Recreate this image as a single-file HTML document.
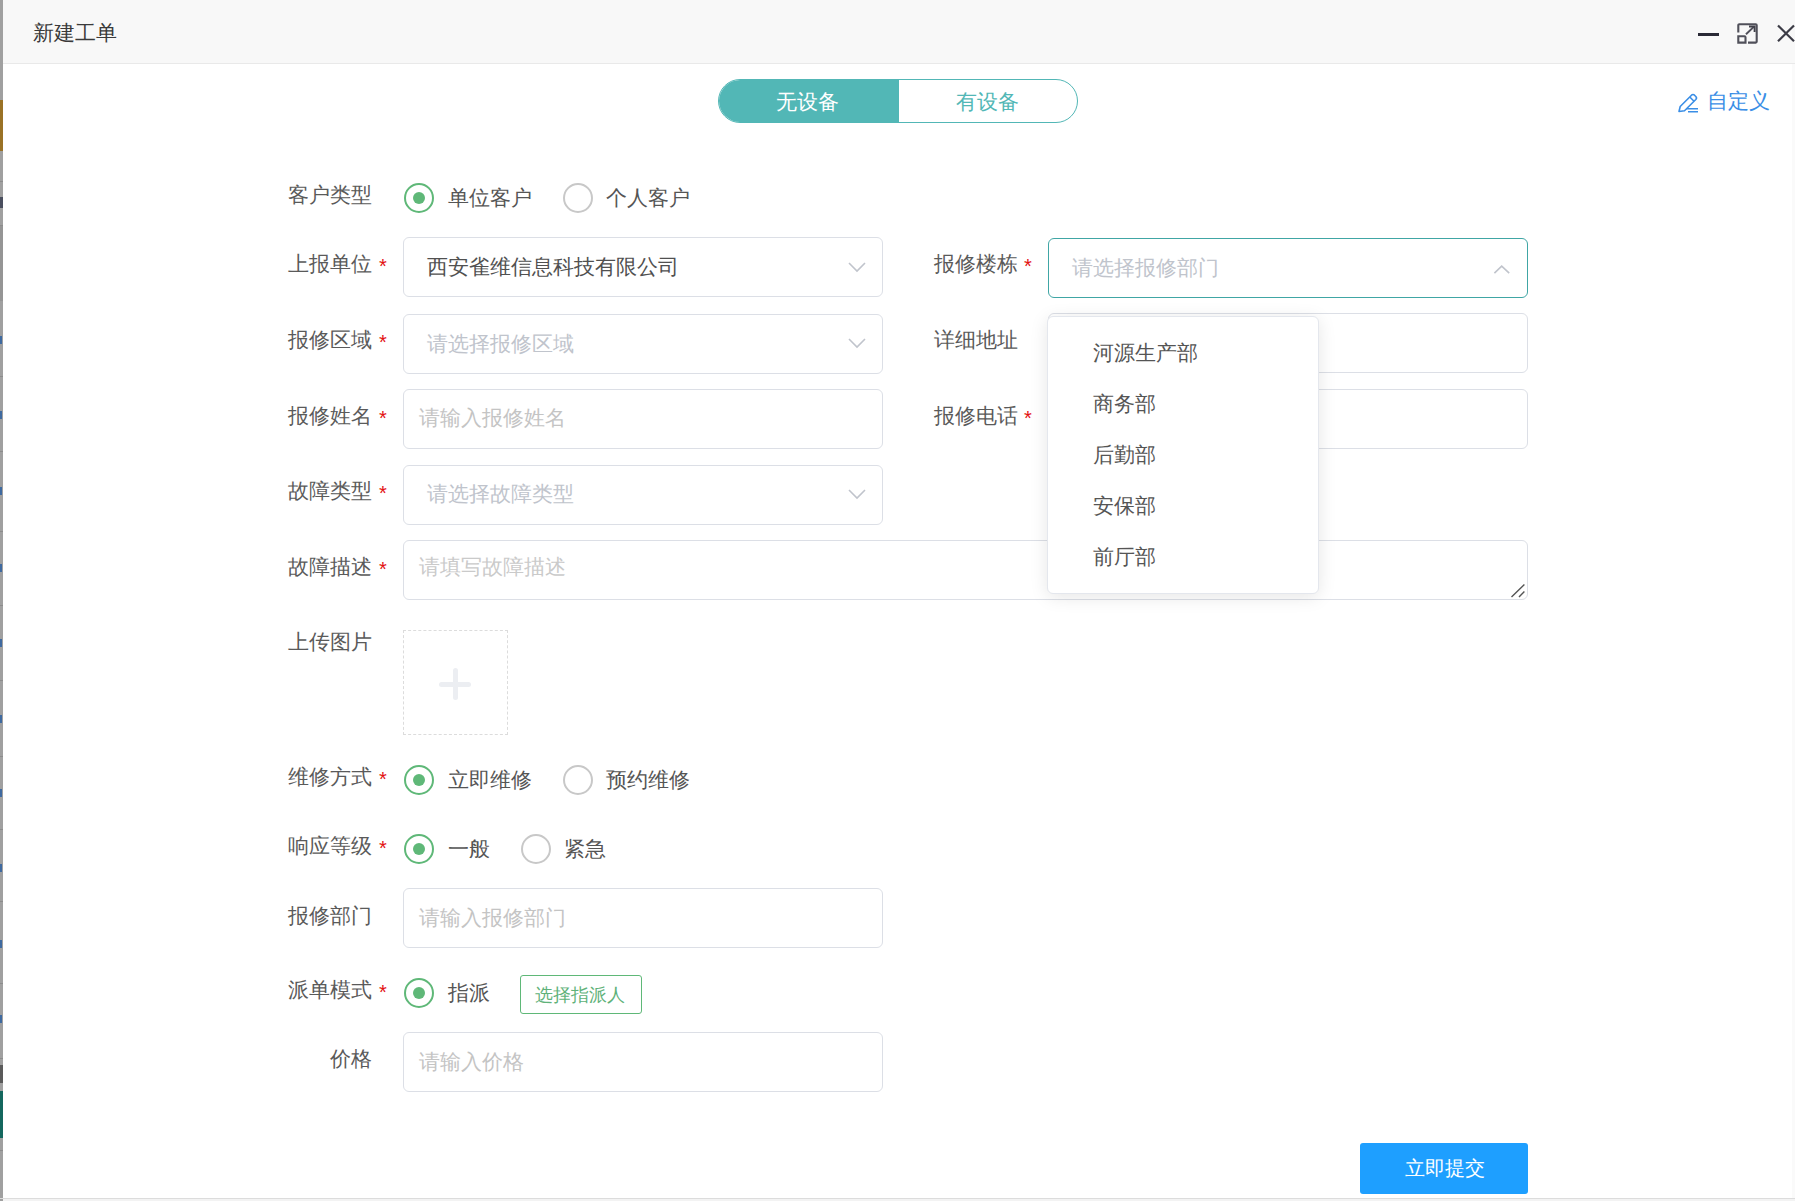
<!DOCTYPE html>
<html><head><meta charset="utf-8">
<style>
html,body{margin:0;padding:0;}
body{width:1795px;height:1201px;position:relative;overflow:hidden;background:#f3f3f3;font-family:"Liberation Sans",sans-serif;}
.a{position:absolute;}
.t{position:absolute;white-space:nowrap;line-height:1;}
.lbl{font-size:21px;color:#5a5a5a;}
.star{position:absolute;color:#e31010;font-size:20px;line-height:1;}
.inp{position:absolute;box-sizing:border-box;border:1px solid #dcdfe6;border-radius:6px;background:#fff;}
.ph{color:#c0c4cc;font-size:21px;}
.ph2{color:#c4c4c4;font-size:21px;}
.radio{position:absolute;box-sizing:border-box;width:30px;height:30px;border-radius:50%;border:2px solid #5fb878;background:#fff;}
.radio.on::after{content:"";position:absolute;left:7px;top:7px;width:12px;height:12px;border-radius:50%;background:#5fb878;}
.radio.off{border-color:#c8c8c8;}
.rtxt{font-size:21px;color:#555;}
.chev{position:absolute;}
.item{font-size:21px;color:#555;}
</style></head><body>
<!-- left underlying strip -->
<div class="a" style="left:0;top:0;width:3px;height:1201px;background:#a0a0a0"></div>
<div class="a" style="left:0;top:100px;width:3px;height:51px;background:#9a7226"></div>
<div class="a" style="left:0;top:197px;width:3px;height:11px;background:#4a4e5e"></div>
<div class="a" style="left:0;top:226px;width:3px;height:75px;background:#959595"></div>
<div class="a" style="left:0;top:181px;width:3px;height:1px;background:#8c8c8c"></div>
<div class="a" style="left:0;top:225px;width:3px;height:1px;background:#8c8c8c"></div>
<div class="a" style="left:0;top:376px;width:3px;height:1px;background:#8c8c8c"></div>
<div class="a" style="left:0;top:451px;width:3px;height:1px;background:#8c8c8c"></div>
<div class="a" style="left:0;top:531px;width:3px;height:1px;background:#8c8c8c"></div>
<div class="a" style="left:0;top:605px;width:3px;height:1px;background:#8c8c8c"></div>
<div class="a" style="left:0;top:680px;width:3px;height:1px;background:#8c8c8c"></div>
<div class="a" style="left:0;top:756px;width:3px;height:1px;background:#8c8c8c"></div>
<div class="a" style="left:0;top:829px;width:3px;height:1px;background:#8c8c8c"></div>
<div class="a" style="left:0;top:901px;width:3px;height:1px;background:#8c8c8c"></div>
<div class="a" style="left:0;top:983px;width:3px;height:1px;background:#8c8c8c"></div>
<div class="a" style="left:0;top:1058px;width:3px;height:1px;background:#8c8c8c"></div>
<div class="a" style="left:0;top:1150px;width:3px;height:1px;background:#8c8c8c"></div>
<div class="a" style="left:0;top:336px;width:2px;height:8px;background:#3f6aa0"></div>
<div class="a" style="left:0;top:411px;width:2px;height:8px;background:#3f6aa0"></div>
<div class="a" style="left:0;top:487px;width:2px;height:8px;background:#3f6aa0"></div>
<div class="a" style="left:0;top:564px;width:2px;height:8px;background:#3f6aa0"></div>
<div class="a" style="left:0;top:639px;width:2px;height:8px;background:#3f6aa0"></div>
<div class="a" style="left:0;top:715px;width:2px;height:8px;background:#3f6aa0"></div>
<div class="a" style="left:0;top:789px;width:2px;height:8px;background:#3f6aa0"></div>
<div class="a" style="left:0;top:864px;width:2px;height:8px;background:#3f6aa0"></div>
<div class="a" style="left:0;top:940px;width:2px;height:8px;background:#3f6aa0"></div>
<div class="a" style="left:0;top:1015px;width:2px;height:8px;background:#3f6aa0"></div>
<div class="a" style="left:0;top:1065px;width:3px;height:18px;background:#5a5a5a"></div>
<div class="a" style="left:0;top:1091px;width:3px;height:47px;background:#14675e"></div>
<!-- dialog -->
<div class="a" style="left:3px;top:0;width:1789px;height:1198px;background:#fff"></div>
<div class="a" style="left:1792px;top:0;width:3px;height:1198px;background:#fafafa"></div>
<div class="a" style="left:0;top:1198px;width:1795px;height:1px;background:#dcdcdc"></div>
<!-- title bar -->
<div class="a" style="left:3px;top:0;width:1792px;height:63px;background:#f8f8f8;border-bottom:1px solid #e9e9e9"></div>
<div class="t" style="left:33px;top:22px;font-size:21px;color:#3a3a3a">新建工单</div>
<div class="a" style="left:1698px;top:33px;width:21px;height:3px;background:#2a2a36"></div>
<svg class="a" style="left:1735px;top:21px" width="26" height="26" viewBox="0 0 26 26">
  <path d="M3.3 11.5 V4.3 Q3.3 3.3 4.3 3.3 H20.7 Q21.7 3.3 21.7 4.3 V20.6 Q21.7 21.6 20.7 21.6 H13" fill="none" stroke="#50505a" stroke-width="2.1"/>
  <path d="M3.3 15.3 H9.5 Q10.5 15.3 10.5 16.3 V21.6 H3.3 Z" fill="none" stroke="#50505a" stroke-width="2.1"/>
  <path d="M11 13.3 L19 5.6" stroke="#50505a" stroke-width="1.9"/>
  <path d="M14 5.5 H19.6 V11" fill="none" stroke="#40404a" stroke-width="1.9"/>
</svg>
<svg class="a" style="left:1775px;top:23px" width="22" height="22" viewBox="0 0 22 22">
  <path d="M3 2.5 L19 18.3 M19 2.5 L3 18.3" stroke="#3c3c46" stroke-width="2.2"/>
</svg>

<!-- segmented toggle -->
<div class="a" style="left:718px;top:79px;width:360px;height:44px;box-sizing:border-box;border:1px solid #52b7b6;border-radius:22px;overflow:hidden;background:#fff">
  <div class="a" style="left:0;top:0;width:180px;height:42px;background:#52b7b6"></div>
</div>
<div class="t" style="left:776px;top:91px;font-size:21px;color:#fff">无设备</div>
<div class="t" style="left:956px;top:91px;font-size:21px;color:#52b7b6">有设备</div>

<!-- customize -->
<svg class="a" style="left:1676px;top:91px" width="24" height="24" viewBox="0 0 24 24">
  <path d="M3 20.5 L4.2 15.5 L15.5 4.2 Q17 2.8 18.5 4.2 L19.8 5.5 Q21.2 7 19.8 8.5 L8.5 19.8 Z" fill="none" stroke="#3a8ee6" stroke-width="1.6" stroke-linejoin="round"/>
  <path d="M13.8 6 L18 10.2" stroke="#3a8ee6" stroke-width="1.6"/>
  <path d="M10 17.8 H22 M12 20.8 H22" stroke="#3a8ee6" stroke-width="1.4"/>
</svg>
<div class="t" style="left:1707px;top:90px;font-size:21px;color:#3a8ee6">自定义</div>

<!-- row 1 客户类型 -->
<div class="t lbl" style="left:288px;top:184px">客户类型</div>
<div class="radio on" style="left:404px;top:183px"></div>
<div class="t rtxt" style="left:448px;top:187px">单位客户</div>
<div class="radio off" style="left:563px;top:183px"></div>
<div class="t rtxt" style="left:606px;top:187px">个人客户</div>

<!-- row 2 -->
<div class="t lbl" style="left:288px;top:253px">上报单位</div>
<div class="star" style="left:379px;top:256px">*</div>
<div class="inp" style="left:403px;top:237px;width:480px;height:60px"></div>
<div class="t" style="left:427px;top:256px;font-size:21px;color:#505050">西安雀维信息科技有限公司</div>
<svg class="chev" style="left:847px;top:261px" width="20" height="12" viewBox="0 0 20 12"><path d="M2 2 L10 10 L18 2" fill="none" stroke="#c0c4cc" stroke-width="1.6"/></svg>

<div class="t lbl" style="left:934px;top:253px">报修楼栋</div>
<div class="star" style="left:1024px;top:256px">*</div>
<div class="inp" style="left:1048px;top:238px;width:480px;height:60px;border-color:#40a6a5"></div>
<div class="t ph" style="left:1072px;top:257px">请选择报修部门</div>
<svg class="chev" style="left:1492px;top:263px" width="20" height="12" viewBox="0 0 20 12"><path d="M2.4 10.2 L9.7 3.2 L17.2 10.2" fill="none" stroke="#c0c4cc" stroke-width="1.6"/></svg>

<!-- row 3 -->
<div class="t lbl" style="left:288px;top:329px">报修区域</div>
<div class="star" style="left:379px;top:332px">*</div>
<div class="inp" style="left:403px;top:314px;width:480px;height:60px"></div>
<div class="t ph" style="left:427px;top:333px">请选择报修区域</div>
<svg class="chev" style="left:847px;top:337px" width="20" height="12" viewBox="0 0 20 12"><path d="M2 2 L10 10 L18 2" fill="none" stroke="#c0c4cc" stroke-width="1.6"/></svg>

<div class="t lbl" style="left:934px;top:329px">详细地址</div>
<div class="inp" style="left:1048px;top:313px;width:480px;height:60px"></div>

<!-- row 4 -->
<div class="t lbl" style="left:288px;top:405px">报修姓名</div>
<div class="star" style="left:379px;top:408px">*</div>
<div class="inp" style="left:403px;top:389px;width:480px;height:60px"></div>
<div class="t ph2" style="left:419px;top:407px">请输入报修姓名</div>

<div class="t lbl" style="left:934px;top:405px">报修电话</div>
<div class="star" style="left:1024px;top:408px">*</div>
<div class="inp" style="left:1048px;top:389px;width:480px;height:60px"></div>

<!-- row 5 -->
<div class="t lbl" style="left:288px;top:480px">故障类型</div>
<div class="star" style="left:379px;top:483px">*</div>
<div class="inp" style="left:403px;top:465px;width:480px;height:60px"></div>
<div class="t ph" style="left:427px;top:483px">请选择故障类型</div>
<svg class="chev" style="left:847px;top:488px" width="20" height="12" viewBox="0 0 20 12"><path d="M2 2 L10 10 L18 2" fill="none" stroke="#c0c4cc" stroke-width="1.6"/></svg>

<!-- row 6 textarea -->
<div class="t lbl" style="left:288px;top:556px">故障描述</div>
<div class="star" style="left:379px;top:559px">*</div>
<div class="inp" style="left:403px;top:540px;width:1125px;height:60px"></div>
<div class="t ph2" style="left:419px;top:556px;color:#cacaca">请填写故障描述</div>
<svg class="a" style="left:1510px;top:582px" width="16" height="16" viewBox="0 0 16 16"><path d="M1.5 15 L14.4 2.5 M9 15 L14.4 9.5" stroke="#555" stroke-width="1.4"/></svg>

<!-- row 7 upload -->
<div class="t lbl" style="left:288px;top:631px">上传图片</div>
<div class="a" style="left:403px;top:630px;width:105px;height:105px;box-sizing:border-box;border:1px dashed #dcdcdc"></div>
<div class="a" style="left:439px;top:681.5px;width:32px;height:5px;background:#eceef2;border-radius:2.5px"></div>
<div class="a" style="left:452.5px;top:668px;width:5px;height:32px;background:#eceef2;border-radius:2.5px"></div>

<!-- row 8 -->
<div class="t lbl" style="left:288px;top:766px">维修方式</div>
<div class="star" style="left:379px;top:769px">*</div>
<div class="radio on" style="left:404px;top:765px"></div>
<div class="t rtxt" style="left:448px;top:769px">立即维修</div>
<div class="radio off" style="left:563px;top:765px"></div>
<div class="t rtxt" style="left:606px;top:769px">预约维修</div>

<!-- row 9 -->
<div class="t lbl" style="left:288px;top:835px">响应等级</div>
<div class="star" style="left:379px;top:838px">*</div>
<div class="radio on" style="left:404px;top:834px"></div>
<div class="t rtxt" style="left:448px;top:838px">一般</div>
<div class="radio off" style="left:521px;top:834px"></div>
<div class="t rtxt" style="left:564px;top:838px">紧急</div>

<!-- row 10 -->
<div class="t lbl" style="left:288px;top:905px">报修部门</div>
<div class="inp" style="left:403px;top:888px;width:480px;height:60px"></div>
<div class="t ph2" style="left:419px;top:907px">请输入报修部门</div>

<!-- row 11 -->
<div class="t lbl" style="left:288px;top:979px">派单模式</div>
<div class="star" style="left:379px;top:982px">*</div>
<div class="radio on" style="left:404px;top:978px"></div>
<div class="t rtxt" style="left:448px;top:982px">指派</div>
<div class="a" style="left:520px;top:975px;width:122px;height:39px;box-sizing:border-box;border:1px solid #5fb878;border-radius:3px"></div>
<div class="t" style="left:535px;top:986px;font-size:18px;color:#5fb27a">选择指派人</div>

<!-- row 12 -->
<div class="t lbl" style="left:330px;top:1048px">价格</div>
<div class="inp" style="left:403px;top:1032px;width:480px;height:60px"></div>
<div class="t ph2" style="left:419px;top:1051px">请输入价格</div>

<!-- submit -->
<div class="a" style="left:1360px;top:1143px;width:168px;height:51px;background:#1e9fff;border-radius:3px"></div>
<div class="t" style="left:1405px;top:1158px;font-size:20px;color:#fff">立即提交</div>

<!-- dropdown -->
<div class="a" style="left:1047px;top:316px;width:272px;height:278px;box-sizing:border-box;border:1px solid #e4e7ed;border-radius:6px;background:#fff;box-shadow:0 3px 18px rgba(0,0,0,0.1)"></div>
<div class="t item" style="left:1093px;top:342px">河源生产部</div>
<div class="t item" style="left:1093px;top:393px">商务部</div>
<div class="t item" style="left:1093px;top:444px">后勤部</div>
<div class="t item" style="left:1093px;top:495px">安保部</div>
<div class="t item" style="left:1093px;top:546px">前厅部</div>
</body></html>
